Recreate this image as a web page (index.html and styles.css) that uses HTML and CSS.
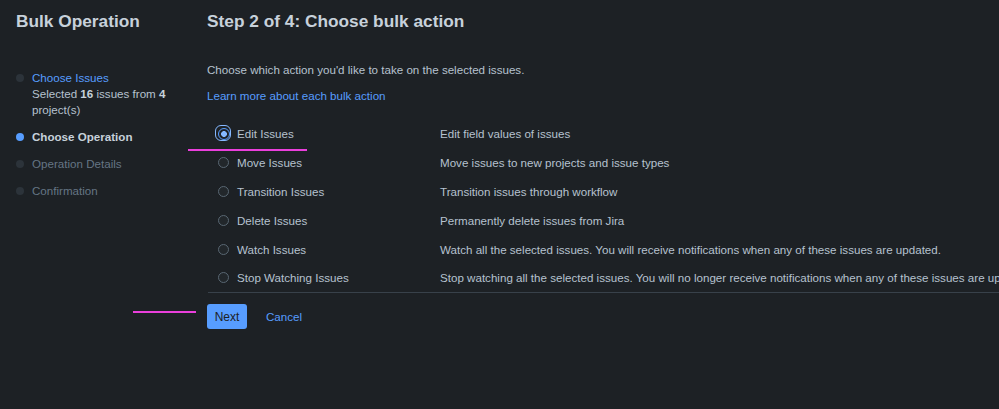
FILE: index.html
```html
<!DOCTYPE html>
<html>
<head>
<meta charset="utf-8">
<link rel="stylesheet" href="styles.css">
</head>
<body>
<div class="page">
  <aside class="sidebar">
    <h1 class="title">Bulk Operation</h1>
    <ol class="steps">
      <li class="step done">
        <span class="dot"></span>
        <div class="step-body">
          <a class="step-link" href="#">Choose Issues</a>
          <div class="step-sub">Selected <b>16</b> issues from <b>4</b> project(s)</div>
        </div>
      </li>
      <li class="step active">
        <span class="dot"></span>
        <div class="step-body">Choose Operation</div>
      </li>
      <li class="step todo">
        <span class="dot"></span>
        <div class="step-body">Operation Details</div>
      </li>
      <li class="step todo">
        <span class="dot"></span>
        <div class="step-body">Confirmation</div>
      </li>
    </ol>
  </aside>
  <main class="main">
    <h2 class="heading">Step 2 of 4: Choose bulk action</h2>
    <p class="intro">Choose which action you'd like to take on the selected issues.</p>
    <a class="learn" href="#">Learn more about each bulk action</a>
    <div class="options">
      <div class="option">
        <div class="opt-label"><span class="radio checked"></span><span class="label-text">Edit Issues</span><span class="mark mark-edit"></span></div>
        <div class="opt-desc">Edit field values of issues</div>
      </div>
      <div class="option">
        <div class="opt-label"><span class="radio"></span><span class="label-text">Move Issues</span></div>
        <div class="opt-desc">Move issues to new projects and issue types</div>
      </div>
      <div class="option">
        <div class="opt-label"><span class="radio"></span><span class="label-text">Transition Issues</span></div>
        <div class="opt-desc">Transition issues through workflow</div>
      </div>
      <div class="option">
        <div class="opt-label"><span class="radio"></span><span class="label-text">Delete Issues</span></div>
        <div class="opt-desc">Permanently delete issues from Jira</div>
      </div>
      <div class="option">
        <div class="opt-label"><span class="radio"></span><span class="label-text">Watch Issues</span></div>
        <div class="opt-desc">Watch all the selected issues. You will receive notifications when any of these issues are updated.</div>
      </div>
      <div class="option">
        <div class="opt-label"><span class="radio"></span><span class="label-text">Stop Watching Issues</span></div>
        <div class="opt-desc">Stop watching all the selected issues. You will no longer receive notifications when any of these issues are updated.</div>
      </div>
    </div>
    <div class="actions">
      <span class="mark mark-next"></span>
      <button class="btn-next">Next</button>
      <a class="btn-cancel" href="#">Cancel</a>
    </div>
  </main>
</div>
</body>
</html>
```

FILE: styles.css
```css
html, body {
  margin: 0;
  padding: 0;
  background: #1d2125;
  overflow: hidden;
}
body {
  width: 999px;
  height: 409px;
  font-family: "Liberation Sans", Arial, sans-serif;
  font-size: 11.6px;
  color: #b6c2cf;
}
.page {
  display: flex;
  width: 999px;
  height: 409px;
}
.sidebar {
  width: 191px;
  flex: none;
  padding: 9px 0 0 16px;
}
.title {
  margin: 0;
  font-size: 17.3px;
  line-height: 24px;
  font-weight: bold;
  color: #c7d1db;
  white-space: nowrap;
}
.steps {
  list-style: none;
  margin: 37px 0 0 0;
  padding: 0;
  display: flex;
  flex-direction: column;
  gap: 11px;
}
.step {
  display: flex;
  align-items: flex-start;
  gap: 8px;
  line-height: 16px;
}
.dot {
  flex: none;
  width: 8px;
  height: 8px;
  border-radius: 50%;
  background: #2c333a;
  margin-top: 4px;
}
.step.active .dot {
  background: #579dff;
}
.step-link {
  color: #579dff;
  text-decoration: none;
}
.step-sub {
  color: #b6c2cf;
}
.step-sub b {
  color: #c7d1db;
}
.step.active .step-body {
  font-weight: bold;
  color: #c7d1db;
}
.step.todo .step-body {
  color: #738496;
  opacity: 0.85;
}
.main {
  flex: 1;
  min-width: 0;
  padding-top: 9px;
  position: relative;
}
.heading {
  margin: 0;
  font-size: 17.3px;
  line-height: 24px;
  font-weight: bold;
  color: #c7d1db;
  white-space: nowrap;
}
.intro {
  margin: 29px 0 0 0;
  line-height: 16px;
  color: #b6c2cf;
}
.learn {
  display: block;
  margin-top: 10px;
  line-height: 16px;
  color: #579dff;
  text-decoration: none;
}
.options {
  margin: 15.6px 0 0 1px;
  width: 1200px;
  border-bottom: 1px solid #38414a;
}
.option {
  display: grid;
  grid-template-columns: 232px 1fr;
  height: 28.8px;
  align-items: center;
  white-space: nowrap;
}
.opt-label {
  display: flex;
  align-items: center;
  padding-left: 10px;
  gap: 8px;
  position: relative;
  color: #b6c2cf;
}
.opt-desc {
  color: #b6c2cf;
}
.radio {
  flex: none;
  box-sizing: border-box;
  width: 11px;
  height: 11px;
  border-radius: 50%;
  border: 1.5px solid #596773;
  background: #22272b;
  position: relative;
}
.radio.checked {
  width: 12px;
  height: 12px;
  margin-left: -0.5px;
  margin-right: -0.5px;
  border: 1.5px solid #579dff;
  background: radial-gradient(circle, #85b8ff 0 2.6px, #1d2125 3.2px);
}
.radio.checked::before {
  content: "";
  position: absolute;
  left: -4px;
  top: -4px;
  width: 14px;
  height: 14px;
  border: 1.5px solid #85b8ff;
  border-radius: 6px;
}
.mark {
  position: absolute;
  height: 2px;
  background: #ea3fdc;
}
.mark-edit {
  left: -20px;
  top: 22px;
  width: 119px;
}
.actions {
  display: flex;
  align-items: center;
  gap: 19px;
  margin-top: 11px;
  position: relative;
}
.mark-next {
  left: -74px;
  top: 7px;
  width: 63px;
}
.btn-next {
  width: 40px;
  height: 25px;
  border: none;
  border-radius: 3px;
  background: #579dff;
  color: #1d2125;
  font-family: "Liberation Sans", Arial, sans-serif;
  font-size: 12px;
  padding: 0;
}
.btn-cancel {
  color: #579dff;
  text-decoration: none;
  line-height: 16px;
}
```
